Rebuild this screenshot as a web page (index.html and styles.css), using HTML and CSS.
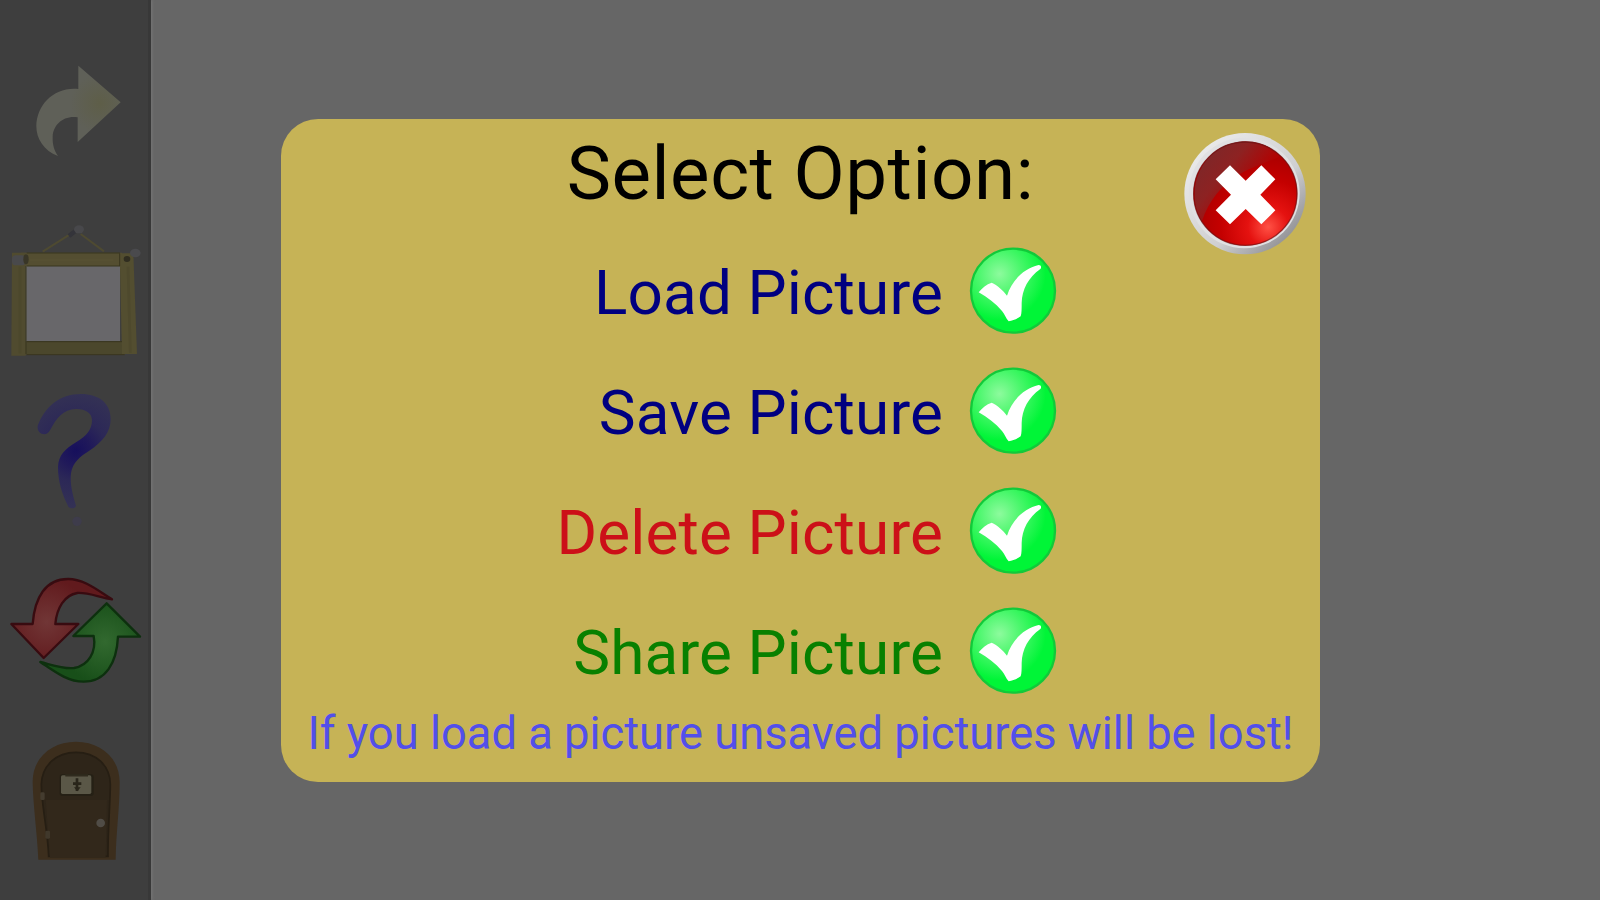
FILE: index.html
```
<!DOCTYPE html>
<html lang="en">

<head>
  <meta charset="UTF-8" />
  <meta name="viewport" content="width=device-width, initial-scale=1.0"/>
  <title>Select Option</title>
  <link rel="stylesheet" href="styles.css">
</head>
<body>
  <nav class="sidebar">
    <!-- redo -->
    <svg class="tool" viewBox="0 0 450 510">
      <defs>
        <radialGradient id="redoFill" gradientUnits="userSpaceOnUse" cx="300" cy="190" r="90">
          <stop offset="0" stop-color="#5e5e48"/>
          <stop offset="1" stop-color="#5f6058"/>
        </radialGradient>
      </defs>
      <path fill="url(#redoFill)" d="M235 77 L362 187 L233 306 V232 C190 225 159 255 158 290 C157 315 163 332 174 348 C132 332 109 297 109 258 C111 193 163 140 235 147 Z"/>
    </svg>

    <!-- picture frame -->
    <svg class="tool" viewBox="0 0 450 510">
      <path d="M128 125 L218 68 M242 72 L312 124" fill="none" stroke="#4e4a31" stroke-width="6"/>
      <path d="M207 78 L225 64" stroke="#34343a" stroke-width="13"/>
      <ellipse cx="237" cy="58" rx="15" ry="12" fill="#48484b"/>
      <path fill="#68676a" d="M77 168 H360 V394 H77 Z"/>
      <path fill="#544e31" d="M62 128 H366 V168 H62 Z"/>
      <path fill="#4b472c" d="M74 394 H374 V434 H74 Z"/>
      <path fill="#504b2f" d="M36 128 H77 V437 H34 Z"/>
      <path fill="#534e30" d="M359 130 H400 L411 432 H366 Z"/>
      <path d="M60 170 V430 M384 170 L391 428" stroke="#4a462b" stroke-width="8" opacity=".5"/>
      <path d="M80 129 H360 M80 168 H360 M80 395 H366 M80 434 H374 M78 168 V432 M359 130 V168" fill="none" stroke="#39361f" stroke-width="3"/>
      <path d="M90 150 H340" stroke="#5b5535" stroke-width="5" opacity=".5"/>
      <rect x="36" y="136" width="40" height="30" rx="11" fill="#49494b"/>
      <ellipse cx="78" cy="148" rx="8" ry="15" fill="#393627"/>
      <ellipse cx="406" cy="129" rx="16" ry="13" fill="#4a4a4d"/>
      <ellipse cx="381" cy="147" rx="10" ry="9" fill="#302d20"/>
    </svg>

    <!-- help -->
    <svg class="tool" viewBox="0 0 450 510">
      <defs>
        <radialGradient id="helpFill" gradientUnits="userSpaceOnUse" cx="228" cy="212" r="185">
          <stop offset="0" stop-color="#160f5c"/>
          <stop offset=".25" stop-color="#20195a"/>
          <stop offset=".5" stop-color="#2c2857"/>
          <stop offset="1" stop-color="#353354"/>
        </radialGradient>
      </defs>
      <path fill="url(#helpFill)" d="M113 137 C135 80 178 42 243 42 C297 42 332 70 332 117 C332 158 306 186 270 211 C239 231 218 247 213 280 C209 310 218 345 228 377 C226 386 212 388 205 380 C187 344 174 306 174 262 C175 226 195 207 228 187 C262 167 276 147 276 120 C275 99 258 87 229 87 C188 88 170 114 150 151 C139 173 109 161 113 137 Z"/>
      <circle cx="231" cy="424" r="14" fill="#3e3c4b"/>
    </svg>

    <!-- refresh -->
    <svg class="tool" viewBox="0 -30 450 510">
      <defs>
        <radialGradient id="redFill" gradientUnits="userSpaceOnUse" cx="140" cy="185" r="130">
          <stop offset="0" stop-color="#713636"/>
          <stop offset="1" stop-color="#611a1d"/>
        </radialGradient>
        <radialGradient id="greenFill" gradientUnits="userSpaceOnUse" cx="315" cy="245" r="130">
          <stop offset="0" stop-color="#32692f"/>
          <stop offset="1" stop-color="#184f19"/>
        </radialGradient>
      </defs>
      <path fill="url(#redFill)" stroke="#380b10" stroke-width="7" stroke-linejoin="round" d="M34 192 H98 C104 112 137 57 204 57 C253 57 293 91 336 118 C299 112 263 97 232 99 C193 105 170 145 166 192 H235 L131 294 Z"/>
      <path fill="url(#greenFill)" stroke="#0d300e" stroke-width="7" stroke-linejoin="round" d="M320 130 L420 230 H354 C350 310 317 365 251 365 C202 365 163 334 121 306 C160 316 192 328 222 324 C265 317 290 276 281 228 H220 Z"/>
    </svg>

    <!-- exit door -->
    <svg class="tool" viewBox="0 -15 450 510">
      <path fill="#3c2e1d" d="M115 404 C111 320 100 250 98 175 C96 98 155 50 228 50 C301 50 359 98 359 172 C359 250 348 325 347 404 Z"/>
      <path fill="#2e2519" stroke="#261e13" stroke-width="5" d="M146 394 C143 310 125 250 124 178 C126 121 169 82 228 82 C288 82 330 121 331 178 C330 250 323 320 324 394 Z"/>
      <path fill="#32281b" d="M137 225 H321 L317 398 H150 Z"/>
      <rect x="179" y="148" width="102" height="65" rx="8" fill="#252015"/>
      <rect x="183" y="151" width="91" height="56" rx="5" fill="#5a5747"/>
      <path d="M196 151 H264" stroke="#302b1e" stroke-width="7"/>
      <path d="M231 160 V198 M219 176 H244" stroke="#29251a" stroke-width="8"/>
      <path d="M222 187 H242 L232 199 Z" fill="#29251a"/>
      <circle cx="302" cy="294" r="13" fill="#504c46"/>
      <rect x="121" y="202" width="13" height="23" rx="4" fill="#443c2f"/>
      <rect x="136" y="317" width="14" height="24" rx="4" fill="#40382b"/>
    </svg>
  </nav>

  <!-- shared tick icon -->
  <svg class="sprite">
    <defs>
      <radialGradient id="tickFill" cx=".34" cy=".3" r=".55">
        <stop offset="0" stop-color="#8dfb9d"/>
        <stop offset=".45" stop-color="#4df76e"/>
        <stop offset="1" stop-color="#00f537"/>
      </radialGradient>
      <symbol id="tick" viewBox="0 0 264 264">
        <circle cx="132" cy="134" r="126" fill="url(#tickFill)" stroke="#12c93a" stroke-width="7"/>
        <path fill="#fff" d="M29 139 C40 126 52 115 68 110 C85 117 102 133 114 149 C128 106 160 69 209 57 C215 57 219 63 214 69 C178 94 159 131 158 171 C158 188 158 203 155 211 C144 219 132 224 119 226 C111 217 107 205 99 195 C80 172 56 155 29 139 Z"/>
      </symbol>
    </defs>
  </svg>

  <div class="overlay">
    <div class="dialog">
      <h1>Select Option:</h1>
      <button class="close" aria-label="Close">
        <svg viewBox="0 0 372 372">
          <defs>
            <linearGradient id="ring" x1="0" y1="0" x2="1" y2="1">
              <stop offset=".15" stop-color="#e9e9e9"/>
              <stop offset=".6" stop-color="#cfcfd1"/>
              <stop offset=".9" stop-color="#8b8b8f"/>
            </linearGradient>
            <radialGradient id="closeFill" cx=".72" cy=".82" r=".65">
              <stop offset="0" stop-color="#ff5145"/>
              <stop offset=".3" stop-color="#e51210"/>
              <stop offset=".7" stop-color="#c40000"/>
              <stop offset="1" stop-color="#b00000"/>
            </radialGradient>
            <linearGradient id="shine" x1="0" y1=".1" x2=".8" y2=".7">
              <stop offset="0" stop-color="#77292b"/>
              <stop offset=".45" stop-color="#8d2222"/>
              <stop offset=".8" stop-color="#b00404"/>
            </linearGradient>
          </defs>
          <circle cx="186" cy="188" r="182" fill="url(#ring)"/>
          <circle cx="184" cy="186" r="166" fill="#e0e0e2"/>
          <circle cx="187" cy="188" r="156" fill="url(#closeFill)"/>
          <path fill="url(#shine)" d="M56 272 C6 183 49 63 147 37 C205 19 260 42 292 75 C225 110 110 122 56 272 Z"/>
          <circle cx="187" cy="188" r="155" fill="none" stroke="#651012" stroke-width="4" opacity=".6"/>
          <path fill="#fff" d="M141 103 L188 149 L235 103 L277 145 L232 191 L277 238 L235 280 L188 234 L141 280 L98 238 L144 191 L98 145 Z"/>
        </svg>
      </button>

      <ul class="options">
        <li class="load"><span>Load Picture</span> <svg><use href="#tick"/></svg></li>
        <li class="save"><span>Save Picture</span> <svg><use href="#tick"/></svg></li>
        <li class="delete"><span>Delete Picture</span> <svg><use href="#tick"/></svg></li>
        <li class="share"><span>Share Picture</span> <svg><use href="#tick"/></svg></li>
      </ul>

      <p class="note">If you load a picture unsaved pictures will be lost!</p>
    </div>
  </div>
</body>
</html>
```
FILE: styles.css
```
* {
  margin: 0;
  padding: 0;
  box-sizing: border-box;
  font-family: Roboto, sans-serif;
}

body {
  background: #666;
  height: 100vh;
  overflow: hidden;
}

.sidebar {
  width: 151px;
  height: 100vh;
  padding-top: 40px;
  background-color: #3e3e3e;
  border-right: 3px solid #383838;
  box-shadow: 1px 0 3px #777;
  display: flex;
  flex-direction: column;
}

.tool {
  width: 150px;
  height: 170px;
  flex-shrink: 0;
}

.sprite {
  position: absolute;
  width: 0;
  height: 0;
}

.overlay {
  position: absolute;
  inset: 0;
  display: flex;
  justify-content: center;
  align-items: center;
}

.dialog {
  position: relative;
  width: 1039px;
  height: 663px;
  margin-left: 1px;
  background-color: #c6b356;
  border-radius: 37px;
}

h1 {
  height: 111px;
  line-height: 109px;
  font-size: 74.5px;
  font-weight: 400;
  letter-spacing: 0.5px;
  text-align: center;
  color: #000;
}

.close {
  position: absolute;
  top: 12px;
  right: 13px;
  width: 124px;
  height: 124px;
  border: none;
  background: none;
  cursor: pointer;
}

.close svg {
  display: block;
  width: 100%;
}

.options {
  list-style: none;
  width: 776px;
}

.options li {
  height: 120px;
  display: flex;
  justify-content: flex-end;
  align-items: center;
  gap: 26px;
  font-size: 62px;
  letter-spacing: 0.15px;
}

.options span {
  padding-top: 6px;
}

.options svg {
  width: 88px;
  height: 88px;
}

.load,
.save {
  color: #000080;
}

.delete {
  color: #cc1018;
}

.share {
  color: #088000;
}

.note {
  font-size: 45.3px;
  line-height: 48px;
  text-align: center;
  white-space: nowrap;
  color: #524fea;
}
```
